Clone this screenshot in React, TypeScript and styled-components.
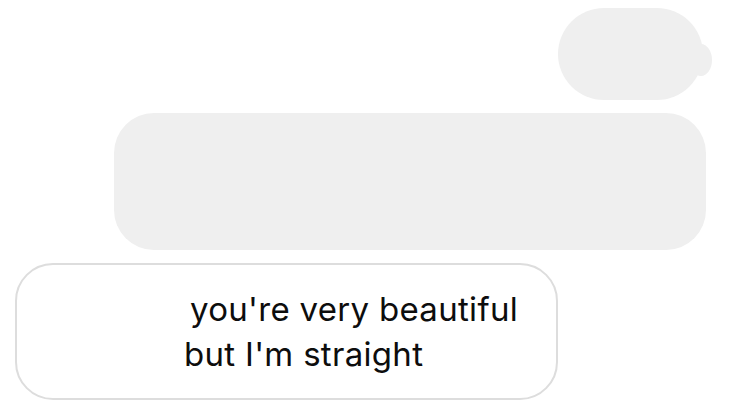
import styled, { createGlobalStyle } from "styled-components";

const GlobalStyle = createGlobalStyle`
    html, body {
        margin: 0;
        padding: 0;
        background: #ffffff;
    }
    body {
        font-family: Inter, "Noto Sans", "Liberation Sans", sans-serif;
        -webkit-font-smoothing: antialiased;
    }
`;

const Thread = styled.div`
    display: flex;
    flex-direction: column;
    gap: 13px;
    width: 729px;
    height: 408px;
    padding-top: 8px;
    box-sizing: border-box;
    overflow: hidden;
`;

const Sent = styled.div<{ $width: number; $height: number; $right: number; $tail?: boolean }>`
    position: relative;
    align-self: flex-end;
    margin-right: ${(p) => p.$right}px;
    width: ${(p) => p.$width}px;
    height: ${(p) => p.$height}px;
    background: #efefef;
    border-radius: ${(p) => (p.$tail ? 46 : 40)}px;
    box-sizing: border-box;

    ${(p) =>
        p.$tail &&
        `
        &::after {
            content: "";
            position: absolute;
            right: -9px;
            top: 36px;
            width: 22px;
            height: 32px;
            border-radius: 50%;
            background: #efefef;
        }
    `}
`;

const Received = styled.div`
    align-self: flex-start;
    margin-left: 15px;
    width: 543px;
    height: 137px;
    box-sizing: border-box;
    border: 2px solid #dddddd;
    border-radius: 38px;
    background: #ffffff;
    padding: 22px 0 0 167px;
`;

const Message = styled.p`
    margin: 0;
    font-size: 33px;
    line-height: 45px;
    color: #0d0d0d;
    letter-spacing: 0.3px;
`;

const Line = styled.span<{ $indent?: number }>`
    display: block;
    padding-left: ${(p) => p.$indent ?? 0}px;
`;

export default function App() {
    return (
        <>
            <GlobalStyle />
            <Thread>
                <Sent $width={145} $height={92} $right={26} $tail />
                <Sent $width={592} $height={137} $right={23} />
                <Received>
                    <Message>
                        <Line $indent={6}>you're very beautiful</Line>
                        <Line>but I'm straight</Line>
                    </Message>
                </Received>
            </Thread>
        </>
    );
}
